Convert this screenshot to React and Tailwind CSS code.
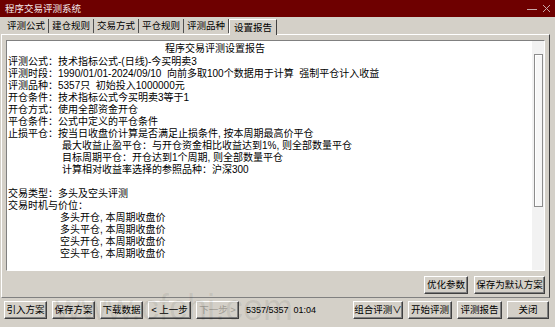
import React from "react";

const tabs = ["评测公式", "建仓规则", "交易方式", "平仓规则", "评测品种"];

const lines = [
  { t: "评测公式：技术指标公式-(日线)-今买明卖3" },
  { t: "评测时段：1990/01/01-2024/09/10  向前多取100个数据用于计算  强制平仓计入收益" },
  { t: "评测品种：5357只  初始投入1000000元" },
  { t: "开仓条件：技术指标公式今买明卖3等于1" },
  { t: "开仓方式：使用全部资金开仓" },
  { t: "平仓条件：公式中定义的平仓条件" },
  { t: "止损平仓：按当日收盘价计算是否满足止损条件, 按本周期最高价平仓" },
  { t: "最大收益止盈平仓：与开仓资金相比收益达到1%, 则全部数量平仓", indent: true },
  { t: "目标周期平仓：开仓达到1个周期, 则全部数量平仓", indent: true },
  { t: "计算相对收益率选择的参照品种：沪深300", indent: true },
  { t: " " },
  { t: "交易类型：多头及空头评测" },
  { t: "交易时机与价位：" },
  { t: "多头开仓, 本周期收盘价", deep: true },
  { t: "多头平仓, 本周期收盘价", deep: true },
  { t: "空头开仓, 本周期收盘价", deep: true },
  { t: "空头平仓, 本周期收盘价", deep: true },
];

function Btn({ children, w, disabled }) {
  return (
    <div
      className={`${w} h-[18px] shrink-0 flex items-center justify-center bg-[#d4d0c8] border border-t-white border-l-white border-r-[#404040] border-b-[#404040] shadow-[inset_-1px_-1px_0_#808080] text-[9.5px] leading-none whitespace-pre ${
        disabled ? "text-[#a09c94]" : "text-black"
      }`}
    >
      {children}
    </div>
  );
}

export default function App() {
  return (
    <div className="w-[555px] h-[327px] bg-[#d4d0c8] relative overflow-hidden flex flex-col font-['Liberation_Sans','Noto_Sans_CJK_SC',sans-serif] text-black">
      {/* title bar */}
      <div className="h-[17px] shrink-0 bg-[#6e0000] flex items-center justify-between pl-[5px] pr-[4px]">
        <span className="text-[9.5px] leading-none text-[#f4eaea]">程序交易评测系统</span>
        <div className="flex items-center gap-[5px]">
          <svg width="10" height="10" viewBox="0 0 10 10">
            <line x1="0" y1="5.5" x2="10" y2="5.5" stroke="#c9a9a9" strokeWidth="1" />
          </svg>
          <svg width="9" height="9" viewBox="0 0 9 9">
            <path d="M1 1 L8 8 M8 1 L1 8" stroke="#c9a9a9" strokeWidth="1" />
          </svg>
        </div>
      </div>

      {/* tabs */}
      <div className="h-[17px] shrink-0 flex items-end pl-[4px]">
        {tabs.map((t) => (
          <div
            key={t}
            className="w-[45px] h-[14px] mb-[1px] flex items-center justify-center border-r border-r-[#505050] text-[9.5px] leading-none"
          >
            {t}
          </div>
        ))}
        <div className="w-[48px] h-[16px] -mb-px relative z-10 bg-[#d4d0c8] flex items-center justify-center border-l border-t border-t-white border-l-white border-r border-r-[#404040] text-[9.5px] leading-none">
          设置报告
        </div>
      </div>

      {/* panel */}
      <div className="ml-[1px] w-[549px] h-[264px] shrink-0 border border-t-white border-l-white border-r-[#404040] border-b-[#808080] flex flex-col">
        <div className="mt-[5px] ml-[4px] mr-[4px] h-[231px] bg-white border border-t-[#808080] border-l-[#808080] border-b-white border-r-white flex">
          <div className="flex-1 pt-[1px] text-[10px] leading-[12px] whitespace-pre">
            <div className="h-[14px] flex items-center pl-[158px]">程序交易评测设置报告</div>
            {lines.map((l, i) => (
              <div
                key={i}
                className={l.deep ? "pl-[53px]" : l.indent ? "pl-[55px]" : "pl-[1px]"}
              >
                {l.t}
              </div>
            ))}
          </div>
          <div className="w-[12px] bg-[#f2f2f2] pt-[13px] pl-[2px]">
            <div className="w-[9px] h-[153px] border border-[#8c8c8c] bg-[#f7f7f7] shadow-[inset_1px_1px_0_#ffffff]" />
          </div>
        </div>
        <div className="mt-[5px] mr-[4px] flex justify-end gap-[6px]">
          <Btn w="w-[44px]">优化参数</Btn>
          <Btn w="w-[71px]">保存为默认方案</Btn>
        </div>
      </div>

      {/* bottom row */}
      <div className="mt-[3px] flex items-center pl-[4px] pr-[6px]">
        <div className="flex items-center gap-[5px]">
          <Btn w="w-[43px]">引入方案</Btn>
          <Btn w="w-[43px]">保存方案</Btn>
          <Btn w="w-[43px]">下载数据</Btn>
          <Btn w="w-[43px]">{"< 上一步"}</Btn>
          <Btn w="w-[43px]" disabled>{"下一步 >"}</Btn>
        </div>
        <span className="ml-[7px] text-[9px] leading-none whitespace-pre">5357/5357  01:04</span>
        <div className="ml-auto flex items-center gap-[5px]">
          <Btn w="w-[50px]">组合评测∨</Btn>
          <Btn w="w-[44px]">开始评测</Btn>
          <Btn w="w-[45px]">评测报告</Btn>
          <Btn w="w-[42px]">关闭</Btn>
        </div>
      </div>

      {/* watermark */}
      <div className="absolute left-[55px] top-[290px] text-[36px] leading-none text-black/[0.07] pointer-events-none whitespace-pre">
        www.cfchi.com
      </div>
    </div>
  );
}
